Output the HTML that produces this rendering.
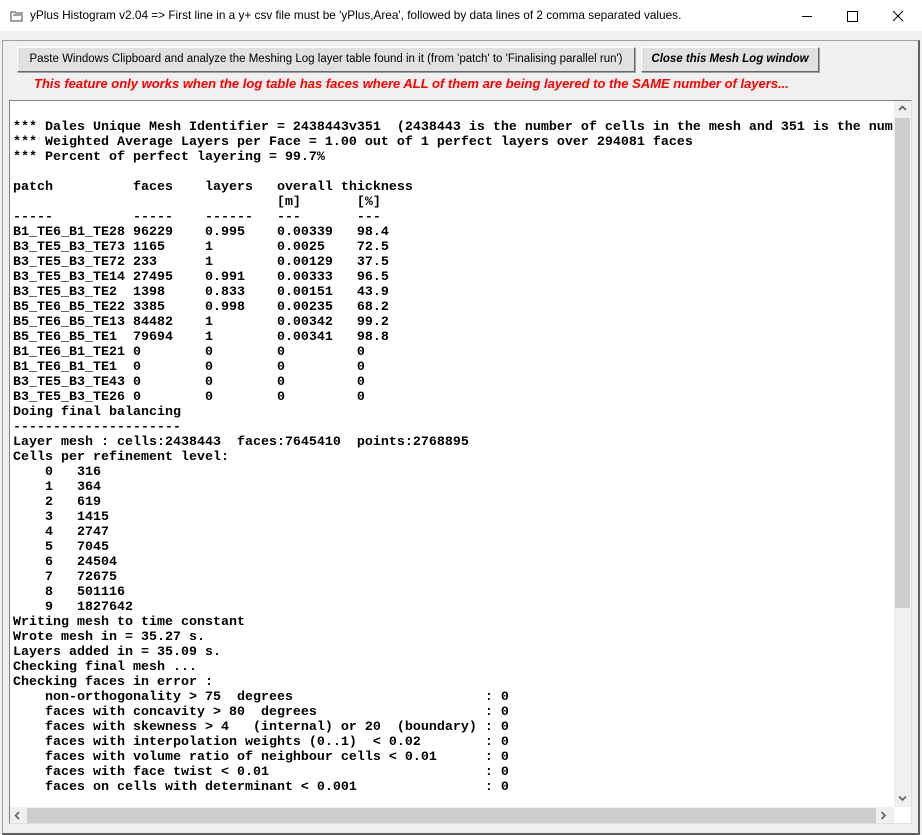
<!DOCTYPE html>
<html><head><style>
body{margin:0;width:922px;height:835px;background:#f0f0f0;position:relative;overflow:hidden;font-family:"Liberation Sans",sans-serif}
.title{position:absolute;left:0;top:0;width:922px;height:31px;background:#fff}
.title .t{position:absolute;left:30px;top:8px;font-size:11.8px;color:#000}
.win{position:absolute;left:2px;top:40px;width:915px;height:792px;border-top:1px solid #a0a0a0;border-left:1px solid #a0a0a0;border-right:2px solid #606060;border-bottom:2px solid #606060}
.btn{position:absolute;top:47px;height:23px;background:#e1e1e1;border:1px solid #fff;border-right-color:#696969;border-bottom-color:#696969;box-shadow:1px 1px 0 #a0a0a0;font-size:11.5px;text-align:center;line-height:23px}
.red{position:absolute;left:34px;top:76px;color:#ff0000;font-weight:bold;font-style:italic;font-size:13px}
.box{position:absolute;left:9px;top:100px;width:901px;height:722px;background:#fff;border:1px solid #828282;border-right-color:#e0e0e0;border-bottom-color:#e0e0e0;overflow:hidden}
pre{position:absolute;left:3px;top:19px;margin:0;font-family:"Liberation Mono",monospace;font-weight:bold;font-size:13.33px;line-height:15px;color:#000;width:880px;overflow:hidden}
.vs{position:absolute;left:884px;top:0;width:17px;height:706px;background:#f0f0f0}
.vt{position:absolute;left:1px;top:17px;width:15px;height:490px;background:#cdcdcd}
.hs{position:absolute;left:0;top:706px;width:884px;height:17px;background:#f0f0f0}
.ht{position:absolute;left:17px;top:1px;width:849px;height:15px;background:#cdcdcd}
svg.a{position:absolute}
</style></head><body>
<div class="title">
<svg style="position:absolute;left:10px;top:10px" width="14" height="12"><path d="M1 2h4l1 1h6v8H1z" fill="none" stroke="#444"/><path d="M3 5h8" stroke="#444"/></svg>
<div class="t">yPlus Histogram v2.04 =&gt; First line in a y+ csv file must be 'yPlus,Area', followed by data lines of 2 comma separated values.</div>
<svg style="position:absolute;left:800px;top:8px" width="110" height="16"><path d="M2 8.5h10" stroke="#000"/><rect x="47.5" y="3.5" width="10" height="10" fill="none" stroke="#000"/><path d="M93 3l10 10M103 3l-10 10" stroke="#000"/></svg>
</div>
<div class="win"></div>
<div class="btn" style="left:17px;width:616px">Paste Windows Clipboard and analyze the Meshing Log layer table found in it (from 'patch' to 'Finalising parallel run')</div>
<div class="btn" style="left:641px;width:176px;font-weight:bold;font-style:italic">Close this Mesh Log window</div>
<div class="red">This feature only works when the log table has faces where ALL of them are being layered to the SAME number of layers...</div>
<div class="box">
<pre>*** Dales Unique Mesh Identifier = 2438443v351  (2438443 is the number of cells in the mesh and 351 is the number
*** Weighted Average Layers per Face = 1.00 out of 1 perfect layers over 294081 faces
*** Percent of perfect layering = 99.7%

patch          faces    layers   overall thickness
                                 [m]       [%]
-----          -----    ------   ---       ---
B1_TE6_B1_TE28 96229    0.995    0.00339   98.4
B3_TE5_B3_TE73 1165     1        0.0025    72.5
B3_TE5_B3_TE72 233      1        0.00129   37.5
B3_TE5_B3_TE14 27495    0.991    0.00333   96.5
B3_TE5_B3_TE2  1398     0.833    0.00151   43.9
B5_TE6_B5_TE22 3385     0.998    0.00235   68.2
B5_TE6_B5_TE13 84482    1        0.00342   99.2
B5_TE6_B5_TE1  79694    1        0.00341   98.8
B1_TE6_B1_TE21 0        0        0         0
B1_TE6_B1_TE1  0        0        0         0
B3_TE5_B3_TE43 0        0        0         0
B3_TE5_B3_TE26 0        0        0         0
Doing final balancing
---------------------
Layer mesh : cells:2438443  faces:7645410  points:2768895
Cells per refinement level:
    0   316
    1   364
    2   619
    3   1415
    4   2747
    5   7045
    6   24504
    7   72675
    8   501116
    9   1827642
Writing mesh to time constant
Wrote mesh in = 35.27 s.
Layers added in = 35.09 s.
Checking final mesh ...
Checking faces in error :
    non-orthogonality &gt; 75  degrees                        : 0
    faces with concavity &gt; 80  degrees                     : 0
    faces with skewness &gt; 4   (internal) or 20  (boundary) : 0
    faces with interpolation weights (0..1)  &lt; 0.02        : 0
    faces with volume ratio of neighbour cells &lt; 0.01      : 0
    faces with face twist &lt; 0.01                           : 0
    faces on cells with determinant &lt; 0.001                : 0</pre>
<div class="vs"><div class="vt"></div>
<svg class="a" style="left:4px;top:4px" width="9" height="7"><path d="M1 5l3.5-3.5L8 5" fill="none" stroke="#606060" stroke-width="1.6"/></svg>
<svg class="a" style="left:4px;top:694px" width="9" height="7"><path d="M1 1.5l3.5 3.5L8 1.5" fill="none" stroke="#606060" stroke-width="1.6"/></svg></div>
<div class="hs"><div class="ht"></div>
<svg class="a" style="left:4px;top:4px" width="7" height="9"><path d="M5 1L1.5 4.5L5 8" fill="none" stroke="#606060" stroke-width="1.6"/></svg>
<svg class="a" style="left:870px;top:4px" width="7" height="9"><path d="M1.5 1L5 4.5L1.5 8" fill="none" stroke="#606060" stroke-width="1.6"/></svg></div>
</div>
</body></html>
